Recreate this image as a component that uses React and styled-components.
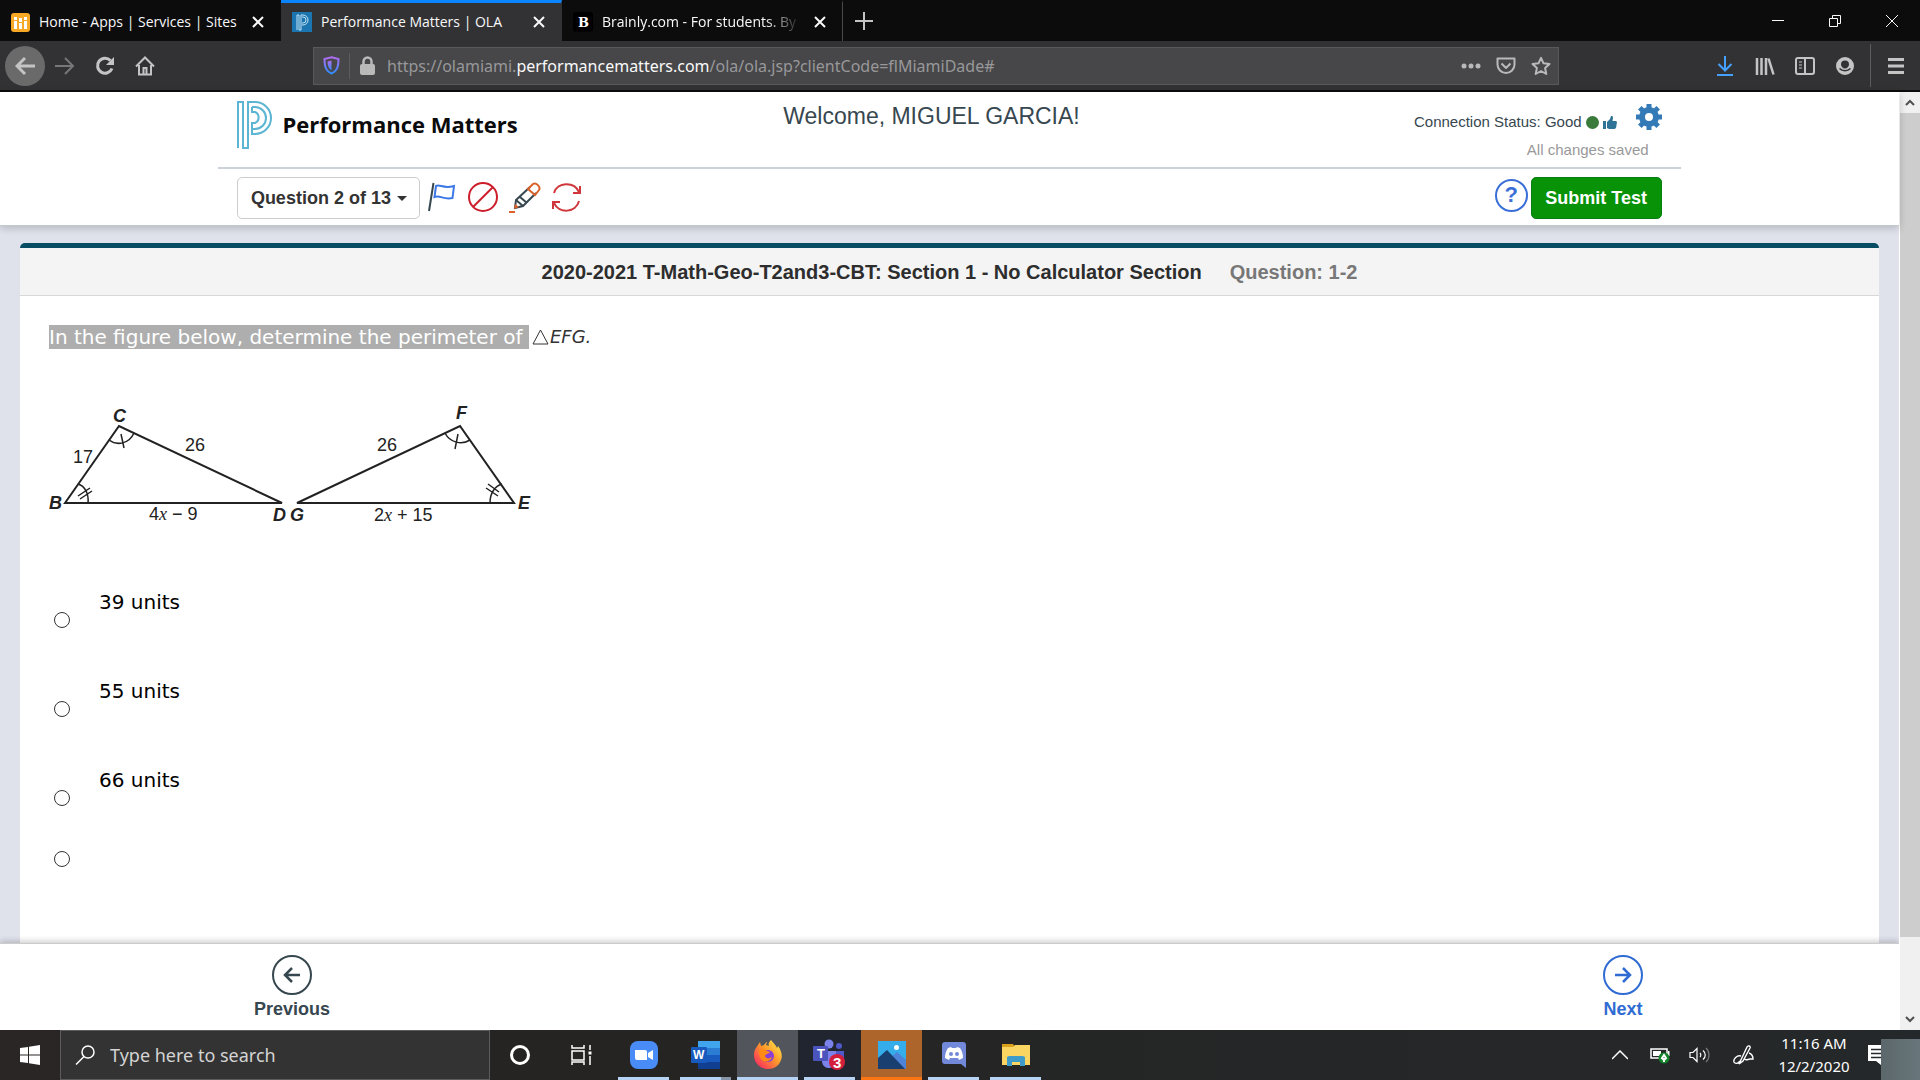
import React, { useState } from "react";
import styled, { createGlobalStyle } from "styled-components";

const GlobalStyle = createGlobalStyle`
  * {
    box-sizing: border-box;
  }
  body {
    margin: 0;
    font-family: "Liberation Sans", Arial, sans-serif;
    color: #333;
  }
  button {
    font-family: inherit;
    border: 0;
    padding: 0;
    background: none;
    cursor: pointer;
  }
  p, h1, h2 {
    margin: 0;
  }
  svg {
    display: block;
    flex: none;
  }
`;

const Desktop = styled.div`
  height: 100vh;
  display: flex;
  flex-direction: column;
  overflow: hidden;
`;

/* ---------- browser ---------- */

const TabBar = styled.div`
  display: flex;
  flex: none;
  height: 41px;
  background: #0c0c0d;
  color: #f9f9fa;
  font-family: "Open Sans", "Noto Sans", sans-serif;
`;
const Tab = styled.div`
  display: flex;
  align-items: center;
  gap: 9px;
  width: 281px;
  padding: 0 12px 0 11px;
  background: ${(p) => (p.$active ? "#323234" : "transparent")};
  border-top: 3px solid ${(p) => (p.$active ? "#0a84ff" : "transparent")};
  border-right: 1px solid ${(p) => (p.$line ? "#4a4a4c" : "transparent")};
`;
const TabTitle = styled.span`
  flex: 1;
  min-width: 0;
  overflow: hidden;
  white-space: nowrap;
  font-size: 14px;
  line-height: 20px;
  ${(p) => p.$fade && "mask-image: linear-gradient(to right, #000 82%, transparent);"}
`;
const TabButton = styled.button`
  display: flex;
  align-items: center;
  justify-content: center;
  width: ${(p) => p.$w || 20}px;
  height: 100%;
  color: #f9f9fa;
`;
const WindowButtons = styled.div`
  display: flex;
  margin-left: auto;
`;

const NavBar = styled.div`
  display: flex;
  align-items: center;
  flex: none;
  height: 51px;
  background: #323234;
  border-bottom: 2px solid #0c0c0d;
  color: #b9b9ba;
  font-family: "Noto Sans", sans-serif;
`;
const NavGroup = styled.div`
  display: flex;
  align-items: center;
  flex: none;
`;
const NavButton = styled.button`
  display: flex;
  align-items: center;
  justify-content: center;
  width: 40px;
  height: 40px;
  color: ${(p) => p.$color || "#c4c4c5"};
  background: ${(p) => (p.$filled ? "#6a6a6b" : "none")};
  border-radius: 50%;
`;
const NavLeft = styled(NavGroup)`
  width: 313px;
  padding-left: 5px;
`;
const NavRight = styled(NavGroup)`
  width: 361px;
  padding-right: 4px;
  justify-content: flex-end;
`;
const NavLine = styled.span`
  width: 1px;
  height: ${(p) => p.$h}px;
  background: #5c5c5e;
  margin: 0 ${(p) => p.$m}px;
`;
const UrlBar = styled.div`
  display: flex;
  align-items: center;
  flex: 1;
  min-width: 0;
  height: 38px;
  padding: 0 0 0 9px;
  background: #474749;
  border: 1px solid #59595b;
`;
const UrlText = styled.span`
  flex: 1;
  min-width: 0;
  overflow: hidden;
  white-space: nowrap;
  margin-left: 11px;
  font-size: 16px;
  color: #98989a;
  b {
    font-weight: 400;
    color: #f9f9fa;
  }
`;
const UrlButton = styled(NavButton)`
  width: 35px;
  color: #b9b9ba;
`;

const Viewport = styled.div`
  display: flex;
  flex: 1;
  min-height: 0;
`;
const Page = styled.div`
  display: flex;
  flex-direction: column;
  flex: 1;
  min-width: 0;
  background: #dfe2eb;
`;
const ScrollBar = styled.div`
  display: flex;
  flex-direction: column;
  width: 21px;
  background: #f0f0f0;
  border-left: 1px solid #fff;
`;
const ScrollButton = styled.button`
  display: flex;
  align-items: center;
  justify-content: center;
  height: 21px;
`;
const ScrollTrack = styled.div`
  flex: 1;
`;
const ScrollThumb = styled.div`
  height: 92%;
  background: #cdcdcd;
`;

/* ---------- test header ---------- */

const Header = styled.header`
  flex: none;
  background: #fff;
  border-bottom: 1px solid #c3c9cd;
  box-shadow: 0 2px 8px rgba(0, 0, 0, 0.2);
  z-index: 1;
`;
const HeaderInner = styled.div`
  width: 77%;
  margin: 0 auto;
`;
const BrandRow = styled.div`
  display: grid;
  grid-template-columns: 1fr auto 1fr;
  height: 77px;
  padding: 0 19px;
  border-bottom: 2px solid #ccd2d8;
`;
const Brand = styled.a`
  display: flex;
  align-items: flex-start;
  gap: 9px;
  padding-top: 9px;
  color: #0b0b0b;
  font: 700 22px/46px "Open Sans", "Noto Sans", sans-serif;
  text-decoration: none;
`;
const Welcome = styled.h1`
  padding-top: 10px;
  margin-right: 36px;
  font-size: 23px;
  font-weight: 400;
  line-height: 28px;
  color: #37474f;
`;
const Status = styled.div`
  display: flex;
  flex-direction: column;
  align-items: flex-end;
  padding-top: 12px;
`;
const StatusLine = styled.div`
  display: flex;
  align-items: flex-start;
  gap: 19px;
`;
const StatusText = styled.div`
  display: flex;
  align-items: center;
  gap: 4px;
  height: 36px;
  font-size: 15px;
  line-height: 20px;
  color: #37474f;
`;
const Saved = styled.p`
  margin-right: 13px;
  font-size: 15px;
  line-height: 20px;
  color: #999;
`;
const ToolRow = styled.div`
  display: flex;
  align-items: center;
  padding: 8px 19px 6px;
`;
const QuestionButton = styled.button`
  display: flex;
  align-items: center;
  justify-content: center;
  gap: 6px;
  width: 183px;
  height: 42px;
  margin-right: 8px;
  border: 1px solid #ccc;
  border-radius: 5px;
  background: #fff;
  font-size: 18px;
  font-weight: 700;
  color: #333;
`;
const Caret = styled.span`
  border: 5px solid transparent;
  border-top-color: #333;
  border-bottom: 0;
`;
const ToolButton = styled.button`
  width: ${(p) => p.$w}px;
  height: 42px;
  padding-bottom: 2px;
  display: flex;
  align-items: center;
`;
const Help = styled.button`
  width: 33px;
  height: 33px;
  margin: 0 3px 6px auto;
  border: 2px solid #3b6fd8;
  border-radius: 50%;
  color: #3b6fd8;
  font-size: 22px;
  font-weight: 700;
  line-height: 28px;
`;
const Submit = styled.button`
  width: 131px;
  height: 42px;
  background: #079207;
  border: 1px solid #0a7d12;
  border-radius: 5px;
  color: #fff;
  font-size: 18px;
  font-weight: 700;
`;

/* ---------- question ---------- */

const Panel = styled.main`
  display: flex;
  flex-direction: column;
  flex: 1;
  min-height: 0;
  margin: 17px 20px 0;
  background: #fff;
  border-top: 5px solid #064c63;
  border-radius: 5px 5px 0 0;
`;
const PanelTitle = styled.h2`
  display: flex;
  justify-content: center;
  gap: 28px;
  flex: none;
  height: 48px;
  border-bottom: 1px solid #d8d8d8;
  background: #f4f4f4;
  font-size: 20px;
  line-height: 49px;
  color: #2d2d2d;
  span {
    color: #777;
  }
`;
const Content = styled.div`
  padding: 29px 29px 0;
  font-family: Verdana, "DejaVu Sans", sans-serif;
`;
const Prompt = styled.p`
  display: flex;
  align-items: center;
  gap: 3px;
  font-size: 20px;
  line-height: 24px;
  mark {
    padding: 0;
    background: #aeaeae;
    color: #fff;
    white-space: pre;
  }
`;
const Term = styled.span`
  display: flex;
  align-items: center;
  gap: 1px;
  color: #333;
  font: italic 18px/24px "DejaVu Sans", sans-serif;
`;
const Figure = styled.svg`
  margin: 51px 0 0;
  fill: none;
  stroke: #222;
  stroke-width: 2;
  text {
    fill: #222;
    stroke: none;
    font: 18px "Liberation Sans", sans-serif;
  }
  .vertex {
    font-weight: 700;
    font-style: italic;
  }
  .x {
    font-family: "Liberation Serif", serif;
    font-style: italic;
  }
`;
const Options = styled.div`
  margin-top: 45px;
`;
const Option = styled.label`
  display: flex;
  align-items: center;
  gap: 29px;
  height: ${(p) => (p.$empty ? 34 : 89)}px;
  padding-left: 5px;
  font-size: 20px;
  line-height: 24px;
  color: #000;
  span {
    padding-bottom: 36px;
  }
`;
const Radio = styled.input`
  appearance: none;
  width: 16px;
  height: 16px;
  margin: 0;
  border: 1px solid #333;
  border-radius: 50%;
  background: #fff;
  &:checked {
    border-width: 5px;
  }
`;

const Footer = styled.footer`
  display: flex;
  justify-content: space-between;
  flex: none;
  height: 87px;
  padding: 11px 256px 0 254px;
  background: #fff;
  border-top: 1px solid #ccc;
  box-shadow: 0 -2px 6px rgba(0, 0, 0, 0.2);
`;
const StepButton = styled.button`
  display: flex;
  flex-direction: column;
  align-items: center;
  align-self: flex-start;
  gap: 3px;
  font-size: 18px;
  font-weight: 700;
  line-height: 22px;
  color: ${(p) => p.$color};
`;

/* ---------- taskbar ---------- */

const Taskbar = styled.div`
  display: flex;
  flex: none;
  height: 50px;
  background: linear-gradient(to right, #2a2625, #252423 30%, #25282a);
  color: #fff;
  font-family: "Noto Sans", sans-serif;
`;
const TaskButton = styled.button`
  display: flex;
  align-items: center;
  justify-content: center;
  width: ${(p) => p.$w || 60}px;
  color: #fff;
`;
const SearchBox = styled.label`
  display: flex;
  align-items: center;
  gap: 15px;
  width: 430px;
  padding: 0 14px;
  background: #333;
  border: 1px solid #5c5c5c;
  input {
    flex: 1;
    min-width: 0;
    border: 0;
    padding: 0;
    outline: 0;
    background: none;
    color: #fff;
    font: 18px "Noto Sans", sans-serif;
  }
  input::placeholder {
    color: #d4d4d4;
    opacity: 1;
  }
`;
const AppButton = styled.button`
  display: flex;
  align-items: center;
  justify-content: center;
  width: 61px;
  margin-right: 1px;
  background-color: ${(p) => p.$bg || "transparent"};
  background-image: linear-gradient(
    to right,
    ${(p) => p.$line || "#b7d3f3"} 41px,
    ${(p) => p.$lineEnd || p.$line || "#b7d3f3"} 41px
  );
  background-size: ${(p) => (p.$wide ? "100%" : "51px")} 3px;
  background-position: bottom center;
  background-repeat: no-repeat;
`;
const Tray = styled.div`
  display: flex;
  align-items: center;
  margin-left: auto;
`;
const Clock = styled.time`
  width: 96px;
  text-align: center;
  font-size: 15px;
  line-height: 23px;
`;
const Corner = styled.div`
  align-self: flex-end;
  width: 39px;
  height: 41px;
  background: linear-gradient(to right, #5b676a, #68767b);
`;

function Icon({ w = 20, h = w, box, children, sw = 2, ...rest }) {
  return (
    <svg
      width={w}
      height={h}
      viewBox={box || `0 0 ${w} ${h}`}
      fill="none"
      stroke="currentColor"
      strokeWidth={sw}
      aria-hidden="true"
      {...rest}
    >
      {children}
    </svg>
  );
}

const Close = () => (
  <Icon w={12}>
    <path d="M1 1l10 10M11 1L1 11" />
  </Icon>
);

const PLogo = () => (
  <Icon w={36} h={48} stroke="#5bb5d3">
    <path d="M1 47V1h5v46h5V1h7a16 16 0 0 1 0 32h-3v-5h3a11 11 0 0 0 0-22h-3M15 6v5h3a6 6 0 0 1 0 11h-3v6" />
  </Icon>
);

function Tabs() {
  return (
    <TabBar>
      <Tab>
        <Icon w={19} stroke="none">
          <rect width="19" height="19" rx="3" fill="#f7a824" />
          <path fill="#fff" d="M3 8h3v8H3zM8 10h3v6H8zM13 8h3v8h-3zM3 4h3v3H3zM8 5h3v4H8zM13 4h3v3h-3z" />
        </Icon>
        <TabTitle>Home - Apps | Services | Sites</TabTitle>
        <TabButton aria-label="Close tab"><Close /></TabButton>
      </Tab>
      <Tab $active>
        <Icon w={20} stroke="none">
          <rect width="20" height="20" fill="#1a75b0" />
          <path stroke="#c5e4f5" strokeWidth="1" d="M5 18V3h2v15h2V3h2a5 5 0 0 1 0 10h-1M10 5h1a3 3 0 0 1 0 6h-1" />
        </Icon>
        <TabTitle>Performance Matters | OLA</TabTitle>
        <TabButton aria-label="Close tab"><Close /></TabButton>
      </Tab>
      <Tab $line>
        <Icon w={20} stroke="none">
          <rect width="20" height="20" rx="3" fill="#000" />
          <text x="5" y="15" fill="#fff" fontFamily="DejaVu Serif, serif" fontWeight="700" fontSize="13">B</text>
        </Icon>
        <TabTitle $fade>Brainly.com - For students. By st</TabTitle>
        <TabButton aria-label="Close tab"><Close /></TabButton>
      </Tab>
      <TabButton $w={42} aria-label="New tab">
        <Icon w={18} style={{ color: "#c4c4c5" }}><path d="M9 0v18M0 9h18" /></Icon>
      </TabButton>
      <WindowButtons>
        <TabButton $w={57} aria-label="Minimize"><Icon w={12} sw={1}><path d="M0 5.5h12" /></Icon></TabButton>
        <TabButton $w={57} aria-label="Restore">
          <Icon w={12} sw={1}><path d="M.5 3.5h8v8h-8zM3.5 3.5v-3h8v8h-3" /></Icon>
        </TabButton>
        <TabButton $w={57} aria-label="Close window"><Icon w={14} sw={1}><path d="M1 1l12 12M13 1L1 13" /></Icon></TabButton>
      </WindowButtons>
    </TabBar>
  );
}

function Navigation() {
  return (
    <NavBar>
      <NavLeft>
        <NavButton $filled aria-label="Back">
          <Icon w={20} sw={3}><path d="M20 10H2M10 2l-8 8 8 8" /></Icon>
        </NavButton>
        <NavButton $color="#77777a" aria-label="Forward">
          <Icon w={20}><path d="M0 10h18M10 2l8 8-8 8" /></Icon>
        </NavButton>
        <NavButton aria-label="Reload">
          <Icon w={20} sw={3}>
            <path d="M17 12.5a7.5 7.5 0 1 1-1.5-8" />
            <path d="M19 1v8h-8z" fill="currentColor" stroke="none" />
          </Icon>
        </NavButton>
        <NavButton aria-label="Home">
          <Icon w={20}><path d="M1 10.5L10 1.5l9 9M4 9v9.500h12V9M8.500 18v-6h3v6" /></Icon>
        </NavButton>
      </NavLeft>
      <UrlBar>
        <Icon w={17} h={19}>
          <defs>
            <linearGradient id="shield" x1="0" y1="0" x2="0" y2="1">
              <stop offset="0" stopColor="#b36cf0" />
              <stop offset="1" stopColor="#2f8cff" />
            </linearGradient>
          </defs>
          <path stroke="url(#shield)" d="M8.500 1.200L15.500 3c0 8-1.500 12-7 14.500C3 15 1.500 11 1.500 3z" />
          <path stroke="none" fill="url(#shield)" d="M8.500 4.500v10C6 13 4.500 10 4.500 5.500z" />
        </Icon>
        <NavLine $h={26} $m={9} />
        <Icon w={17} h={19}>
          <rect x="1" y="8" width="15" height="11" rx="2" fill="currentColor" stroke="none" />
          <path d="M4.500 9V5.500a4 4 0 0 1 8 0V9" strokeWidth="2.500" />
        </Icon>
        <UrlText>https://olamiami.<b>performancematters.com</b>/ola/ola.jsp?clientCode=flMiamiDade#</UrlText>
        <UrlButton aria-label="Page actions">
          <Icon w={20} h={6} fill="currentColor" stroke="none">
            <circle cx="3" cy="3" r="2.500" /><circle cx="10" cy="3" r="2.500" /><circle cx="17" cy="3" r="2.500" />
          </Icon>
        </UrlButton>
        <UrlButton aria-label="Save to Pocket">
          <Icon w={20} h={18}><path d="M1.500 1.500h17v6a8.500 8.500 0 0 1-17 0zM5.500 6.500L10 11l4.500-4.500" strokeLinejoin="round" /></Icon>
        </UrlButton>
        <UrlButton aria-label="Bookmark">
          <Icon w={20}><path d="M10 1.800l2.500 5.500 6 .700-4.400 4.100 1.200 5.900L10 15l-5.300 3 1.200-5.900L1.500 8l6-.700z" strokeLinejoin="round" /></Icon>
        </UrlButton>
      </UrlBar>
      <NavRight>
        <NavButton $color="#45a1ff" aria-label="Downloads">
          <Icon w={16} h={20}><path d="M8 0v14M1.500 8L8 14.500 14.500 8M0 19h16" /></Icon>
        </NavButton>
        <NavButton aria-label="Library">
          <Icon w={20} h={18} sw={2.5}><path d="M2 1v17M6.500 1v17M11 1v17M13.500 1.500l5 16" /></Icon>
        </NavButton>
        <NavButton aria-label="Sidebars">
          <Icon w={20} h={18}><rect x="1" y="1" width="18" height="16" rx="2" /><path d="M10 1v16" /><path d="M4 5h3M4 8h3M4 11h3" strokeWidth="1" /></Icon>
        </NavButton>
        <NavButton aria-label="Account">
          <Icon w={18}>
            <path fill="currentColor" stroke="none" fillRule="evenodd" d="M9 0a9 9 0 1 0 0 18A9 9 0 0 0 9 0zM9 3.500a4 4 0 0 1 4 4c0 2-2 4-4 4s-4-2-4-4a4 4 0 0 1 4-4z" />
            <path stroke="#323234" strokeWidth="1.500" d="M3.500 11.500c3 3 8 3 11 0" />
          </Icon>
        </NavButton>
        <NavLine $h={43} $m={5} />
        <NavButton aria-label="Menu">
          <Icon w={16} h={16} sw={3}><path d="M0 1.500h16M0 8h16M0 14.500h16" /></Icon>
        </NavButton>
      </NavRight>
    </NavBar>
  );
}

function TestHeader() {
  return (
    <Header>
      <HeaderInner>
        <BrandRow>
          <Brand href="#">
            <PLogo />
            Performance Matters
          </Brand>
          <Welcome>Welcome, MIGUEL GARCIA!</Welcome>
          <Status>
            <StatusLine>
              <StatusText>
                Connection Status: Good
                <Icon w={13} stroke="none"><circle cx="6.500" cy="6.500" r="6.500" fill="#3a7a3a" /></Icon>
                <Icon w={14} h={13} fill="#2f7396" stroke="none">
                  <path d="M0 5h3v8H0zM4 6l3-3 1-3h1.500l.5 2-.5 3H13l1 1-1 6-1.500 1H6l-2-1z" />
                </Icon>
              </StatusText>
              <Icon w={26} stroke="none">
                <circle cx="13" cy="13" r="7" stroke="#337ab7" strokeWidth="6" />
                <path
                  stroke="#337ab7"
                  strokeWidth="5"
                  d="M13 0v4M13 22v4M0 13h4M22 13h4M3.800 3.800l3 3M19.200 19.200l3 3M3.800 22.200l3-3M19.200 6.800l3-3"
                />
              </Icon>
            </StatusLine>
            <Saved>All changes saved</Saved>
          </Status>
        </BrandRow>
        <ToolRow>
          <QuestionButton>Question 2 of 13<Caret /></QuestionButton>
          <ToolButton $w={40} aria-label="Flag question">
            <Icon w={27} h={30}>
              <path d="M5.500 1L1 29" stroke="#37474f" />
              <path d="M8 4c4-2 7 3 18 0l-1.500 12c-9 2-12-3-18-1z" stroke="#3b78e7" />
            </Icon>
          </ToolButton>
          <ToolButton $w={40} aria-label="Eliminate answers">
            <Icon w={30} style={{ color: "#cc1f2b" }}><circle cx="15" cy="15" r="14" /><path d="M25 5L5 25" /></Icon>
          </ToolButton>
          <ToolButton $w={44} aria-label="Highlighter">
            <Icon w={34} h={31}>
              <path stroke="#37474f" d="M22 5L8 18 7 26l8-2L28 11M8 18l7 6M12 15l7 6" />
              <path stroke="#d9622b" d="M20 7l5-5c3-2 8 3 6 6l-4 5zM1 30h6" />
              <path fill="#d9622b" stroke="none" d="M7 22l4 3-5 2z" />
            </Icon>
          </ToolButton>
          <ToolButton $w={30} aria-label="Reset">
            <Icon w={29} h={29} style={{ color: "#d0373c" }}>
              <path d="M2 10C5-1 22-2 27 9M28 3v7h-7M27 18c-3 12-20 13-25 2M1 26v-7h7" />
            </Icon>
          </ToolButton>
          <Help aria-label="Help">?</Help>
          <Submit>Submit Test</Submit>
        </ToolRow>
      </HeaderInner>
    </Header>
  );
}

function Triangles() {
  return (
    <Figure width="490" height="130" viewBox="0 0 490 130" role="img" aria-label="Triangles BCD and GFE">
      <path d="M16 103L70 26l163 77zM248 103l163-77 54 77z" />
      <g strokeWidth="1.500">
        <path d="M60 40c8 6 20 4 25-7M72 34l3 14M29 84c7 2 11 10 10 19M29 96l12-8M31 99l12-8" />
        <path d="M396 33c5 10 17 12 25 7M409 34l-3 15M453 84c-7 2-12 9-12 19M437 88l12 8M439 84l11 8" />
      </g>
      <text className="vertex" x="64" y="22">C</text>
      <text className="vertex" x="0" y="109">B</text>
      <text className="vertex" x="224" y="121">D</text>
      <text className="vertex" x="241" y="121">G</text>
      <text className="vertex" x="407" y="19">F</text>
      <text className="vertex" x="469" y="109">E</text>
      <text x="24" y="63">17</text>
      <text x="136" y="51">26</text>
      <text x="328" y="51">26</text>
      <text x="100" y="120">4<tspan className="x">x</tspan> − 9</text>
      <text x="325" y="121">2<tspan className="x">x</tspan>{" + "}15</text>
    </Figure>
  );
}

const answers = ["39 units", "55 units", "66 units", ""];

function Question() {
  const [picked, setPicked] = useState(null);

  return (
    <Panel>
      <PanelTitle>
        2020-2021 T-Math-Geo-T2and3-CBT: Section 1 - No Calculator Section
        <span>Question: 1-2</span>
      </PanelTitle>
      <Content>
        <Prompt>
          <mark>In the figure below, determine the perimeter of </mark>
          <Term>
            <Icon w={17} h={16} sw={1}><path d="M1 15L8.500 1 16 15z" /></Icon>
            EFG.
          </Term>
        </Prompt>
        <Triangles />
        <Options>
          {answers.map((answer, i) => (
            <Option key={i} $empty={!answer}>
              <Radio
                type="radio"
                name="answer"
                aria-label={answer || "Answer 4"}
                checked={picked === i}
                onChange={() => setPicked(i)}
              />
              {answer && <span>{answer}</span>}
            </Option>
          ))}
        </Options>
      </Content>
    </Panel>
  );
}

function StepBar() {
  return (
    <Footer>
      <StepButton $color="#37474f">
        <Icon w={40}><circle cx="20" cy="20" r="19" /><path strokeWidth="2.500" d="M28 20H13M20 13l-7 7 7 7" /></Icon>
        Previous
      </StepButton>
      <StepButton $color="#2f6bd3">
        <Icon w={40}><circle cx="20" cy="20" r="19" /><path strokeWidth="2.500" d="M12 20h15M20 13l7 7-7 7" /></Icon>
        Next
      </StepButton>
    </Footer>
  );
}

function TaskbarApps() {
  return (
    <>
      <AppButton aria-label="Zoom">
        <Icon w={28} stroke="none">
          <rect width="28" height="28" rx="8" fill="#4a8cf7" />
          <path fill="#fff" d="M5 9h10a2 2 0 0 1 2 2v8H7a2 2 0 0 1-2-2zM18 12l5-3v10l-5-3z" />
        </Icon>
      </AppButton>
      <AppButton $lineEnd="#8795a8" aria-label="Word">
        <Icon w={29} h={28} stroke="none">
          <path fill="#41a5ee" d="M7 0h22v7H7z" />
          <path fill="#2b7cd3" d="M7 7h22v7H7z" />
          <path fill="#185abd" d="M7 14h22v7H7z" />
          <path fill="#103f91" d="M7 21h22v7H7z" />
          <rect y="6" width="16" height="16" rx="1" fill="#185abd" />
          <text x="2" y="18" fill="#fff" fontFamily="Liberation Sans" fontWeight="700" fontSize="12">W</text>
        </Icon>
      </AppButton>
      <AppButton $wide $bg="#52565c" aria-label="Firefox">
        <Icon w={30} stroke="none">
          <defs>
            <linearGradient id="fox" x1="1" y1="0" x2="0" y2="1">
              <stop offset="0" stopColor="#fff44f" />
              <stop offset=".45" stopColor="#ff9a2a" />
              <stop offset="1" stopColor="#f5156c" />
            </linearGradient>
          </defs>
          <path fill="url(#fox)" d="M18 0c2 3 5 5 6 8l1-2c3 4 5 10 3 14-2 6-7 9-13 9C7 29 1 23 1 15c0-5 2-7 4-10l2-3 1 4 3-1c1-1 2-3 3-3l-1 3 3 1c-1-2 0-4 2-6z" />
          <circle cx="15" cy="16" r="6" fill="#8a3fd6" />
          <path fill="#ff8a16" d="M6 10c3-2 6-1 8 1l3 1c-1 2-5 2-5 4 1 3 4 3 7 1-1 5-8 6-11 2-2-3-2-6-2-9z" />
        </Icon>
      </AppButton>
      <AppButton $bg="#20252f" aria-label="Teams">
        <Icon w={33} h={32} stroke="none">
          <circle cx="16" cy="5" r="4.500" fill="#7b83eb" />
          <circle cx="26" cy="7" r="3" fill="#5059c9" />
          <path fill="#5059c9" d="M20 12h11v9a6 6 0 0 1-9 4z" />
          <path fill="#7b83eb" d="M9 12h14v9a7 7 0 0 1-14 2z" />
          <rect y="7" width="15" height="15" rx="1" fill="#4b53bc" />
          <text x="4" y="19" fill="#fff" fontFamily="Liberation Sans" fontWeight="700" fontSize="13">T</text>
          <circle cx="24" cy="23" r="8" fill="#d41f3c" />
          <text x="20" y="29" fill="#fff" fontFamily="Liberation Sans" fontWeight="700" fontSize="15">3</text>
        </Icon>
      </AppButton>
      <AppButton $wide $bg="#ad652b" $line="#fb7512" aria-label="Photos">
        <Icon w={28} stroke="none">
          <rect width="28" height="28" fill="#35adea" />
          <path fill="#4d83d8" d="M12 17l7-6 9 8v9H12z" />
          <path fill="#183f70" d="M0 17l9-8 18 19H0z" />
          <circle cx="18.500" cy="6.500" r="2.500" fill="#fff" />
        </Icon>
      </AppButton>
      <AppButton aria-label="Discord">
        <Icon w={24} h={26} stroke="none">
          <path fill="#7289da" d="M3 0h18a3 3 0 0 1 3 3v23l-5-4H3a3 3 0 0 1-3-3V3a3 3 0 0 1 3-3z" />
          <path fill="#fff" d="M6 6l3-1 1 1h4l1-1 3 1c2 3 3 6 3 10l-4 2-1-2H8l-1 2-4-2c0-4 1-7 3-10z" />
          <circle cx="9" cy="12" r="2" fill="#7289da" /><circle cx="15" cy="12" r="2" fill="#7289da" />
        </Icon>
      </AppButton>
      <AppButton aria-label="File Explorer">
        <Icon w={28} h={24} stroke="none">
          <path fill="#d9a11e" d="M0 1h11l2 3h-13z" />
          <path fill="#fbd561" d="M0 4h11l2-2h15v20H0z" />
          <path fill="#3f9bc8" d="M5 14l2-1h14l2 1v9h-5v-4h-8v4H5z" />
        </Icon>
      </AppButton>
    </>
  );
}

function SystemTray() {
  return (
    <Tray>
      <TaskButton $w={40} aria-label="Show hidden icons">
        <Icon w={16} h={10} sw={1.5}><path d="M0 9l8-8 8 8" /></Icon>
      </TaskButton>
      <TaskButton $w={40} aria-label="Battery">
        <Icon w={20} h={18} stroke="none">
          <path stroke="#fff" strokeWidth="1.500" d="M1 3h16v9H1z" />
          <path fill="#fff" d="M3 5h8v5H3zM18 5h1.500v5H18z" />
          <circle cx="14" cy="12" r="5.500" fill="#12832a" />
          <path stroke="#fff" d="M14 9l2 3-2 2-2-2zM14 12v4" />
        </Icon>
      </TaskButton>
      <TaskButton $w={40} aria-label="Volume">
        <Icon w={22} h={18} sw={1.2}>
          <path d="M1 6.500h3l4-4v13l-4-4H1zM11 7c1 1 1 3 0 4M14 4.500c3 2.500 3 6.500 0 9" />
          <path d="M17 2c4 3.500 4 10.500 0 14" stroke="#777" />
        </Icon>
      </TaskButton>
      <TaskButton $w={46} aria-label="Pen">
        <Icon w={21} h={20} sw={1.4}>
          <path d="M7 17L14 2c1-2 4-1 3 1l-7 13-4 3zM8 11c-4-1-8 3-7 6 1 2 4 2 6-1M12 14c1 2 3 0 5 0h3c0-3-1-5-4-6" />
        </Icon>
      </TaskButton>
      <Clock>
        11:16 AM
        <br />
        12/2/2020
      </Clock>
      <TaskButton $w={19} aria-label="Notifications">
        <Icon w={13} h={20} fill="#fff" stroke="none" style={{ marginLeft: "auto" }}>
          <path d="M0 0h13v20l-5-4H0z" />
          <path d="M3 4.500h10M3 8.500h10M3 12.500h10" stroke="#25282a" strokeWidth="1.500" />
        </Icon>
      </TaskButton>
      <Corner />
    </Tray>
  );
}

function App() {
  return (
    <Desktop>
      <GlobalStyle />
      <Tabs />
      <Navigation />
      <Viewport>
        <Page>
          <TestHeader />
          <Question />
          <StepBar />
        </Page>
        <ScrollBar>
          <ScrollButton aria-label="Scroll up">
            <Icon w={10} h={7} style={{ color: "#505050" }}><path d="M1 6l4-4 4 4" /></Icon>
          </ScrollButton>
          <ScrollTrack><ScrollThumb /></ScrollTrack>
          <ScrollButton aria-label="Scroll down">
            <Icon w={10} h={7} style={{ color: "#505050" }}><path d="M1 1l4 4 4-4" /></Icon>
          </ScrollButton>
        </ScrollBar>
      </Viewport>
      <Taskbar>
        <TaskButton aria-label="Start">
          <Icon w={20} fill="#fff" stroke="none">
            <path d="M0 3l8-1v7.500H0zM9 1.800L20 0v9.500H9zM0 10.500h8V18l-8-1zM9 10.500h11V20L9 18.200z" />
          </Icon>
        </TaskButton>
        <SearchBox>
          <Icon w={20} sw={1.5}><circle cx="13" cy="7" r="6" /><path d="M9 11.500L1 19.500" /></Icon>
          <input type="text" aria-label="Search" placeholder="Type here to search" />
        </SearchBox>
        <TaskButton aria-label="Cortana"><Icon w={20} sw={3}><circle cx="10" cy="10" r="8.500" /></Icon></TaskButton>
        <TaskButton $w={63} aria-label="Task view">
          <Icon w={21} h={20} sw={1.5}><path d="M1 0v3h12V0M1 6h12v9H1zM1 20v-3h12v3M19 0v5M19 11v9" /><path d="M17.500 6.500h3v3h-3z" fill="#fff" stroke="none" /></Icon>
        </TaskButton>
        <TaskbarApps />
        <SystemTray />
      </Taskbar>
    </Desktop>
  );
}

export default App;
